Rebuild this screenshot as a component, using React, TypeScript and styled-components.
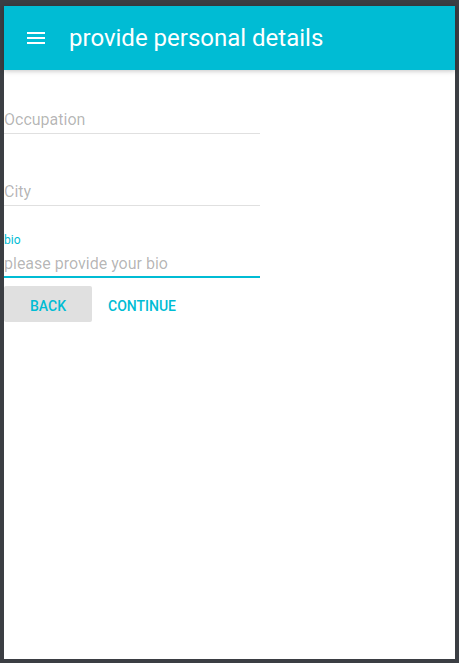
import React from "react";
import styled, { createGlobalStyle } from "styled-components";

const Global = createGlobalStyle`
  html, body { margin: 0; padding: 0; background: #3b3e43; }
  body { font-family: Roboto, "Noto Sans", sans-serif; }
  * { box-sizing: border-box; }
`;

const Frame = styled.div`
  margin: 6px 4px 4px 4px;
  height: 653px;
  background: #ffffff;
  display: flex;
  flex-direction: column;
`;

const AppBar = styled.header`
  height: 64px;
  background: #00bcd4;
  display: flex;
  align-items: center;
  padding-left: 20px;
  box-shadow: 0 1px 6px rgba(0, 0, 0, 0.12), 0 1px 4px rgba(0, 0, 0, 0.12);
  position: relative;
  z-index: 1;
`;

const MenuIcon = styled.svg`
  width: 24px;
  height: 24px;
  fill: #ffffff;
  flex: none;
`;

const Title = styled.h1`
  margin: 0 0 0 21px;
  font-family: Roboto, sans-serif;
  font-weight: 400;
  font-size: 24px;
  color: #ffffff;
  line-height: 64px;
`;

const Form = styled.div`
  width: 256px;
  display: flex;
  flex-direction: column;
`;

const Field = styled.div`
  height: 72px;
  display: flex;
  flex-direction: column;
  justify-content: flex-end;
  padding-bottom: 8px;
`;

const Label = styled.label`
  font-size: 12px;
  line-height: 16px;
  height: 16px;
  color: #00bcd4;
  margin-bottom: 3px;
`;

const Input = styled.input`
  height: 24px;
  margin-bottom: 2px;
  border: none;
  outline: none;
  padding: 0;
  font-family: Roboto, sans-serif;
  font-size: 16px;
  color: rgba(0, 0, 0, 0.87);
  background: transparent;
  &::placeholder {
    color: rgba(0, 0, 0, 0.3);
  }
`;

const Underline = styled.div<{ $focused?: boolean }>`
  height: ${(p) => (p.$focused ? "2px" : "1px")};
  background: ${(p) => (p.$focused ? "#00bcd4" : "#e0e0e0")};
  margin-top: ${(p) => (p.$focused ? "-1px" : "0")};
`;

const Buttons = styled.div`
  display: flex;
`;

const Button = styled.button<{ $raised?: boolean }>`
  min-width: 88px;
  height: 36px;
  padding: 4px 16px 0;
  border: none;
  border-radius: 2px;
  background: ${(p) => (p.$raised ? "#e0e0e0" : "transparent")};
  color: #00bcd4;
  font-family: Roboto, sans-serif;
  font-weight: 500;
  font-size: 14px;
  text-transform: uppercase;
  cursor: pointer;
`;

export default function App() {
  return (
    <>
      <Global />
      <Frame>
        <AppBar>
          <MenuIcon viewBox="0 0 24 24">
            <path d="M3 18h18v-2H3v2zm0-5h18v-2H3v2zm0-7v2h18V6H3z" />
          </MenuIcon>
          <Title>provide personal details</Title>
        </AppBar>
        <Form>
          <Field>
            <Input placeholder="Occupation" />
            <Underline />
          </Field>
          <Field>
            <Input placeholder="City" />
            <Underline />
          </Field>
          <Field>
            <Label>bio</Label>
            <Input placeholder="please provide your bio" />
            <Underline $focused />
          </Field>
          <Buttons>
            <Button $raised>Back</Button>
            <Button>Continue</Button>
          </Buttons>
        </Form>
      </Frame>
    </>
  );
}
